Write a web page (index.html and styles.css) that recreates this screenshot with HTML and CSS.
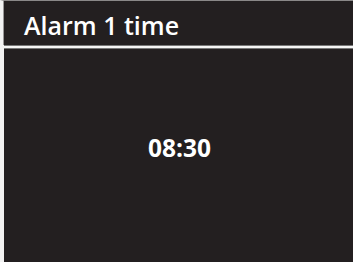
FILE: index.html
```html
<!DOCTYPE html>
<html>
<head>
<meta charset="utf-8">
<link rel="stylesheet" href="styles.css">
</head>
<body>
<div class="screen">
  <div class="header">Alarm 1 time</div>
  <div class="divider"></div>
  <div class="content"><span class="time">08:30</span></div>
</div>
</body>
</html>
```
FILE: styles.css
```css
html, body {
  margin: 0;
  padding: 0;
  width: 353px;
  height: 262px;
  background: #231f20;
  overflow: hidden;
}
.screen {
  width: 353px;
  height: 262px;
  box-sizing: border-box;
  border-left: 4px solid #f2f2f2;
  border-top: 1px solid #8a8888;
  display: flex;
  flex-direction: column;
  background: #231f20;
  font-family: "Open Sans", "Noto Sans", sans-serif;
  color: #ffffff;
}
.header {
  height: 44px;
  box-sizing: border-box;
  padding: 8px 0 0 20px;
  font-size: 25px;
  font-weight: 600;
  line-height: 32px;
  border-left: 1px solid #9a9898;
  margin-left: -1px;
  white-space: nowrap;
}
.divider {
  height: 2px;
  background: #f4f4f4;
  border-top: 1px solid #777;
  border-bottom: 1px solid #777;
}
.content {
  flex: 1;
  display: flex;
  justify-content: center;
  align-items: flex-start;
  padding-top: 83px;
  padding-left: 2px;
}
.time {
  font-size: 24.5px;
  font-weight: 700;
  line-height: 32px;
}
```
